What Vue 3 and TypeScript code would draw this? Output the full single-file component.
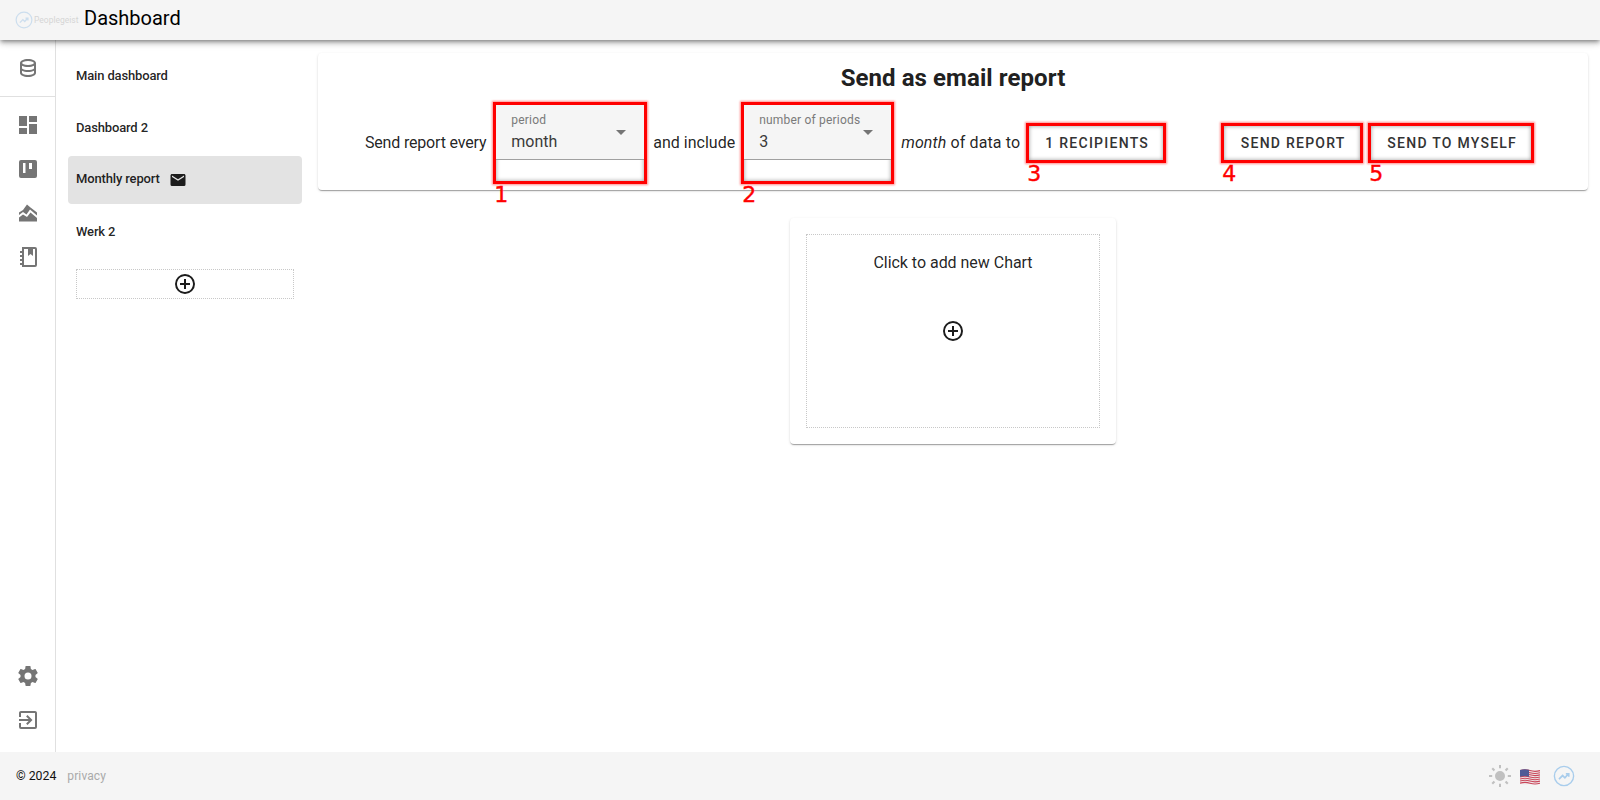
<script setup lang="ts">
const railTop = [
  'M13,3V9H21V3M13,21H21V11H13M3,21H11V15H3M3,13H11V3H3V13Z',
  'M5 3h14a2 2 0 0 1 2 2v14a2 2 0 0 1-2 2H5a2 2 0 0 1-2-2V5a2 2 0 0 1 2-2M7 6v10h2.500V6H7M13 6v6h3V6h-3Z',
  'M3 11.500L7 9L11 3.500L14.500 6.500L21 11.500V14.500L14 8.500L10.500 13.500L7 11L3 14ZM3 16.500L7 13.500L11 16L14.500 11.500L21 17V20.500H3Z',
  'M6 2h13a2 2 0 0 1 2 2v16a2 2 0 0 1-2 2H6v-2H4v-2h2v-2H4v-2h2v-2H4V10h2V8H4V6h2V2M8 4v16h11V4h-2v7l-2.500-2L12 11V4H8Z'
]
const dashboards = [
  { name: 'Main dashboard', active: false, mail: false },
  { name: 'Dashboard 2', active: false, mail: false },
  { name: 'Monthly report', active: true, mail: true },
  { name: 'Werk 2', active: false, mail: false }
]
const plus = 'M12,20C7.59,20 4,16.41 4,12C4,7.59 7.59,4 12,4C16.41,4 20,7.59 20,12C20,16.41 16.41,20 12,20M12,2A10,10 0 0,0 2,12A10,10 0 0,0 12,22A10,10 0 0,0 22,12A10,10 0 0,0 12,2M13,7H11V11H7V13H11V17H13V13H17V11H13V7Z'
const wave = (y: number): string => `M0 ${y}Q5 ${y - 1.6} 10 ${y}T20 ${y}`
const stripes = [2.6, 4.7, 6.8, 8.9, 11, 13.1, 15.2].map(wave)
</script>

<template>
  <div class="app">
    <header class="bar">
      <div class="logo">
        <svg class="logo-mark" viewBox="0 0 24 24" width="18" height="18"><circle cx="12" cy="12" r="10.500" fill="none" stroke="#2f86d6" stroke-width="1.600" /><path d="M6.500 15.500l4-4 2.500 2.500 3.500-4M14 9.500h3.200v3.200" fill="none" stroke="#2f86d6" stroke-width="1.800" /></svg>
        <span class="logo-text">Peoplegeist</span>
      </div>
      <h1 class="bar-title">Dashboard</h1>
    </header>

    <div class="middle">
      <nav class="rail">
        <div class="rail-head">
          <svg viewBox="0 0 24 24" width="24" height="24"><path d="M12 3C7.58 3 4 4.79 4 7V17C4 19.21 7.59 21 12 21S20 19.21 20 17V7C20 4.79 16.42 3 12 3M18 17C18 17.5 15.87 19 12 19S6 17.5 6 17V14.77C7.61 15.55 9.72 16 12 16S16.39 15.55 18 14.77V17M18 12.45C16.7 13.4 14.42 14 12 14C9.58 14 7.3 13.4 6 12.45V9.64C7.47 10.47 9.61 11 12 11C14.39 11 16.53 10.47 18 9.64V12.45M12 9C8.13 9 6 7.5 6 7S8.13 5 12 5C15.87 5 18 6.5 18 7S15.87 9 12 9Z" /></svg>
        </div>
        <div class="rail-list">
          <span v-for="d in railTop" :key="d" class="rail-icon">
            <svg viewBox="0 0 24 24" width="24" height="24"><path :d="d" fill-rule="evenodd" /></svg>
          </span>
        </div>
        <div class="rail-bottom">
          <span class="rail-icon">
            <svg viewBox="0 0 24 24" width="24" height="24"><path d="M12,15.5A3.5,3.5 0 0,1 8.5,12A3.5,3.5 0 0,1 12,8.5A3.5,3.5 0 0,1 15.5,12A3.5,3.5 0 0,1 12,15.5M19.43,12.97C19.47,12.65 19.5,12.33 19.5,12C19.5,11.67 19.47,11.34 19.43,11L21.54,9.37C21.73,9.22 21.78,8.95 21.66,8.73L19.66,5.27C19.54,5.05 19.27,4.96 19.05,5.05L16.56,6.05C16.04,5.66 15.5,5.32 14.87,5.07L14.5,2.42C14.46,2.18 14.25,2 14,2H10C9.75,2 9.54,2.18 9.5,2.42L9.13,5.07C8.5,5.32 7.96,5.66 7.44,6.05L4.95,5.05C4.73,4.96 4.46,5.05 4.34,5.27L2.34,8.73C2.21,8.95 2.27,9.22 2.46,9.37L4.57,11C4.53,11.34 4.5,11.67 4.5,12C4.5,12.33 4.53,12.65 4.57,12.97L2.46,14.63C2.27,14.78 2.21,15.05 2.34,15.27L4.34,18.73C4.46,18.95 4.73,19.03 4.95,18.95L7.44,17.94C7.96,18.34 8.5,18.68 9.13,18.93L9.5,21.58C9.54,21.82 9.75,22 10,22H14C14.25,22 14.46,21.82 14.5,21.58L14.87,18.93C15.5,18.67 16.04,18.34 16.56,17.94L19.05,18.95C19.27,19.03 19.54,18.95 19.66,18.73L21.66,15.27C21.78,15.05 21.73,14.78 21.54,14.63L19.43,12.97Z" /></svg>
          </span>
          <span class="rail-icon">
            <svg viewBox="0 0 24 24" width="24" height="24"><path d="M19,3H5C3.89,3 3,3.89 3,5V9H5V5H19V19H5V15H3V19A2,2 0 0,0 5,21H19A2,2 0 0,0 21,19V5C21,3.89 20.1,3 19,3M10.08,15.58L11.5,17L16.5,12L11.5,7L10.08,8.41L12.67,11H3V13H12.67L10.08,15.58Z" /></svg>
          </span>
        </div>
      </nav>

      <aside class="side">
        <a v-for="item in dashboards" :key="item.name" class="side-item" :class="{ active: item.active }">
          <span class="side-name">{{ item.name }}</span>
          <svg v-if="item.mail" class="mail" viewBox="0 0 24 24"><path d="M20,8L12,13L4,8V6L12,11L20,6M20,4H4C2.89,4 2,4.89 2,6V18A2,2 0 0,0 4,20H20A2,2 0 0,0 22,18V6C22,4.89 21.1,4 20,4Z" /></svg>
        </a>
        <button class="side-add">
          <svg viewBox="0 0 24 24" width="24" height="24"><path :d="plus" /></svg>
        </button>
      </aside>

      <main class="main">
        <section class="card report">
          <h2 class="report-title">Send as email report</h2>
          <div class="report-row">
            <span class="lead">Send report every</span>
            <div class="hl hl-field field-one">
              <div class="field">
                <label>period</label>
                <div class="value">month</div>
                <i class="caret"></i>
              </div>
              <b class="mark">1</b>
            </div>
            <span>and include</span>
            <div class="hl hl-field field-two">
              <div class="field">
                <label>number of periods</label>
                <div class="value">3</div>
                <i class="caret"></i>
              </div>
              <b class="mark">2</b>
            </div>
            <span class="phrase"><em>month</em> of data to</span>
            <div class="hl hl-btn btn-recipients">1 RECIPIENTS<b class="mark">3</b></div>
            <div class="hl hl-btn btn-send">SEND REPORT<b class="mark">4</b></div>
            <div class="hl hl-btn btn-self">SEND TO MYSELF<b class="mark">5</b></div>
          </div>
        </section>

        <section class="card chart">
          <div class="chart-inner">
            <div class="chart-label">Click to add new Chart</div>
            <svg class="chart-plus" viewBox="0 0 24 24" width="24" height="24"><path :d="plus" /></svg>
          </div>
        </section>
      </main>
    </div>

    <footer class="foot">
      <span class="copy">© 2024</span>
      <span class="privacy">privacy</span>
      <div class="foot-right">
        <svg viewBox="0 0 24 24" width="24" height="24"><path fill="#c0c0c0" d="M12 7a5 5 0 1 1 0 10 5 5 0 0 1 0-10M11 1h2v3.200h-2zM11 19.800h2V23h-2zM1 11h3.200v2H1zM19.800 11H23v2h-3.200zM3.500 5l1.500-1.500 2.200 2.200-1.500 1.500zM16.800 18.300l1.500-1.500 2.200 2.200-1.500 1.500zM3.500 19l2.200-2.200 1.500 1.500L5 20.500zM16.800 5.700L19 3.500 20.500 5l-2.200 2.200z" /></svg>
        <svg class="flag" viewBox="0 0 20 17" width="20" height="17">
          <path d="M0 2Q5 .4 10 2T20 2V15.800Q15 14.200 10 15.800T0 15.800Z" fill="#efe6e8" />
          <path v-for="s in stripes" :key="s" :d="s" fill="none" stroke="#c9475a" stroke-width="1.100" />
          <path d="M0 2Q4.500 .6 9 1.800V8.800Q4.500 7.400 0 8.800Z" fill="#4f5a96" />
        </svg>
        <svg viewBox="0 0 24 24" width="22" height="22"><circle cx="12" cy="12" r="10.500" fill="none" stroke="#a9cdec" stroke-width="1.500" /><path d="M6.500 15.500l4-4 2.500 2.500 3.500-4M14 9.500h3.200v3.200" fill="none" stroke="#a9cdec" stroke-width="1.800" /></svg>
      </div>
    </footer>
  </div>
</template>

<style scoped>
.app {
  height: 100vh;
  display: flex;
  flex-direction: column;
  overflow: hidden;
  background: #fff;
  color: rgba(0, 0, 0, 0.87);
  font-family: Roboto, "Liberation Sans", sans-serif;
}
.bar {
  height: 40px;
  flex: none;
  display: flex;
  align-items: center;
  background: #f5f5f5;
  box-shadow: 0 2px 4px -1px rgba(0, 0, 0, 0.4), 0 4px 5px rgba(0, 0, 0, 0.14), 0 1px 10px rgba(0, 0, 0, 0.12);
  position: relative;
  z-index: 2;
}
.logo {
  width: 84px;
  flex: none;
  padding-left: 15px;
  box-sizing: border-box;
  display: flex;
  align-items: center;
  gap: 1px;
  opacity: 0.2;
}
.logo-mark {
  flex: none;
}
.logo-text {
  font-size: 8.500px;
  font-weight: 400;
  color: #555;
  white-space: nowrap;
}
.bar-title {
  margin: 0 0 5px;
  font-size: 20px;
  font-weight: 400;
  color: #000;
  line-height: 36px;
}
.middle {
  flex: 1;
  min-height: 0;
  display: flex;
}
.rail {
  width: 56px;
  flex: none;
  box-sizing: border-box;
  border-right: 1px solid #e0e0e0;
  display: flex;
  flex-direction: column;
  fill: #757575;
}
.rail-head {
  height: 57px;
  flex: none;
  box-sizing: border-box;
  border-bottom: 1px solid #e0e0e0;
  display: flex;
  align-items: center;
  justify-content: center;
}
.rail-list {
  padding-top: 6px;
  display: flex;
  flex-direction: column;
}
.rail-bottom {
  margin-top: auto;
  padding-bottom: 10px;
  display: flex;
  flex-direction: column;
}
.rail-icon {
  height: 44px;
  display: flex;
  align-items: center;
  justify-content: center;
}
.side {
  width: 256px;
  flex: none;
  box-sizing: border-box;
  padding: 12px 10px 0 12px;
  display: flex;
  flex-direction: column;
  gap: 4px;
}
.side-item {
  height: 48px;
  flex: none;
  padding-left: 8px;
  border-radius: 4px;
  display: flex;
  align-items: center;
  gap: 9px;
  font-size: 13px;
  font-weight: 500;
  letter-spacing: -0.15px;
}
.side-name {
  padding-bottom: 1px;
}
.side-item.active .side-name {
  padding-bottom: 3px;
}
.side-item.active {
  background: #e3e3e3;
}
.mail {
  fill: #1c1c1c;
  width: 18px;
  height: 18px;
}
.side-add {
  height: 30px;
  margin: 9px 8px 0;
  flex: none;
  padding: 0;
  box-sizing: border-box;
  background: #fff;
  border: 1px dotted #c8c8c8;
  display: flex;
  align-items: center;
  justify-content: center;
  fill: #1c1c1c;
}
.main {
  flex: 1;
  min-width: 0;
  box-sizing: border-box;
  padding: 13px 12px 0 6px;
  display: flex;
  flex-direction: column;
  align-items: center;
}
.card {
  background: #fff;
  border-radius: 4px;
  box-shadow: 0 2px 1px -1px rgba(0, 0, 0, 0.2), 0 1px 1px rgba(0, 0, 0, 0.14), 0 1px 3px rgba(0, 0, 0, 0.12);
}
.report {
  width: 100%;
  height: 137px;
  box-sizing: border-box;
}
.report-title {
  margin: 0;
  padding-top: 8px;
  text-align: center;
  font-size: 24px;
  font-weight: 700;
  line-height: 34px;
  letter-spacing: 0.08px;
  color: #212121;
}
.report-row {
  margin-top: 7px;
  padding-left: 47px;
  display: flex;
  align-items: flex-start;
  font-size: 16px;
  line-height: 24px;
}
.report-row > span {
  margin-top: 29px;
}
.lead {
  letter-spacing: -0.18px;
}
.hl {
  position: relative;
  flex: none;
  box-sizing: border-box;
  border: 3px solid #ff0000;
  box-shadow: 0 0 2px 1px rgba(255, 0, 0, 0.45), inset 0 0 4px rgba(0, 0, 0, 0.4);
}
.hl-field {
  height: 82px;
  background: #fff;
}
.field-one {
  width: 154px;
  margin: 0 6px 0 7px;
}
.field-two {
  width: 153px;
  margin: 0 7px 0 6px;
}
.field {
  position: relative;
  height: 55px;
  box-sizing: border-box;
  padding: 7px 15px 0;
  background: #f5f5f5;
  border-bottom: 1px solid #a0a0a0;
}
.field label {
  display: block;
  font-size: 12px;
  line-height: 16px;
  letter-spacing: 0.2px;
  color: #7a7a7a;
}
.value {
  font-size: 16px;
  line-height: 24px;
  margin-top: 2px;
  color: #3a3a3a;
}
.caret {
  position: absolute;
  right: 18px;
  top: 25px;
  width: 0;
  height: 0;
  border-left: 5px solid transparent;
  border-right: 5px solid transparent;
  border-top: 5px solid #757575;
}
.mark {
  position: absolute;
  left: -2px;
  top: calc(100% + 1px);
  font-family: "DejaVu Sans", sans-serif;
  font-weight: 400;
  font-size: 22px;
  line-height: 26px;
  color: #ff0000;
  -webkit-text-stroke: 0.4px #ff0000;
}
.hl-btn {
  height: 40px;
  margin-top: 21px;
  padding-left: 2px;
  display: flex;
  align-items: center;
  justify-content: center;
  background: #fff;
  font-size: 14px;
  font-weight: 500;
  letter-spacing: 1.250px;
  color: #333;
}
.phrase {
  letter-spacing: 0.12px;
}
.btn-recipients {
  width: 140px;
  margin-left: 6px;
}
.btn-send {
  width: 142px;
  margin-left: 55px;
}
.btn-self {
  width: 166px;
  margin-left: 5px;
}
.chart {
  margin-top: 28px;
  width: 326px;
  height: 226px;
  box-sizing: border-box;
  padding: 16px;
}
.chart-inner {
  height: 194px;
  box-sizing: border-box;
  border: 1px dotted #c8c8c8;
  display: flex;
  flex-direction: column;
  align-items: center;
}
.chart-label {
  margin-top: 16px;
  font-size: 16px;
  line-height: 24px;
  letter-spacing: -0.03px;
}
.chart-plus {
  margin-top: 44px;
  fill: #1c1c1c;
}
.foot {
  height: 48px;
  flex: none;
  box-sizing: border-box;
  padding: 0 25px 0 16px;
  display: flex;
  align-items: center;
  background: #f5f5f5;
}
.copy {
  font-size: 12.300px;
  color: #111;
}
.privacy {
  margin-left: 11px;
  font-size: 12px;
  letter-spacing: 0.1px;
  color: #aaa;
}
.foot-right {
  margin-left: auto;
  display: flex;
  align-items: center;
  gap: 8px;
}
.flag {
  margin-left: 0;
  margin-right: 5px;
}
</style>
